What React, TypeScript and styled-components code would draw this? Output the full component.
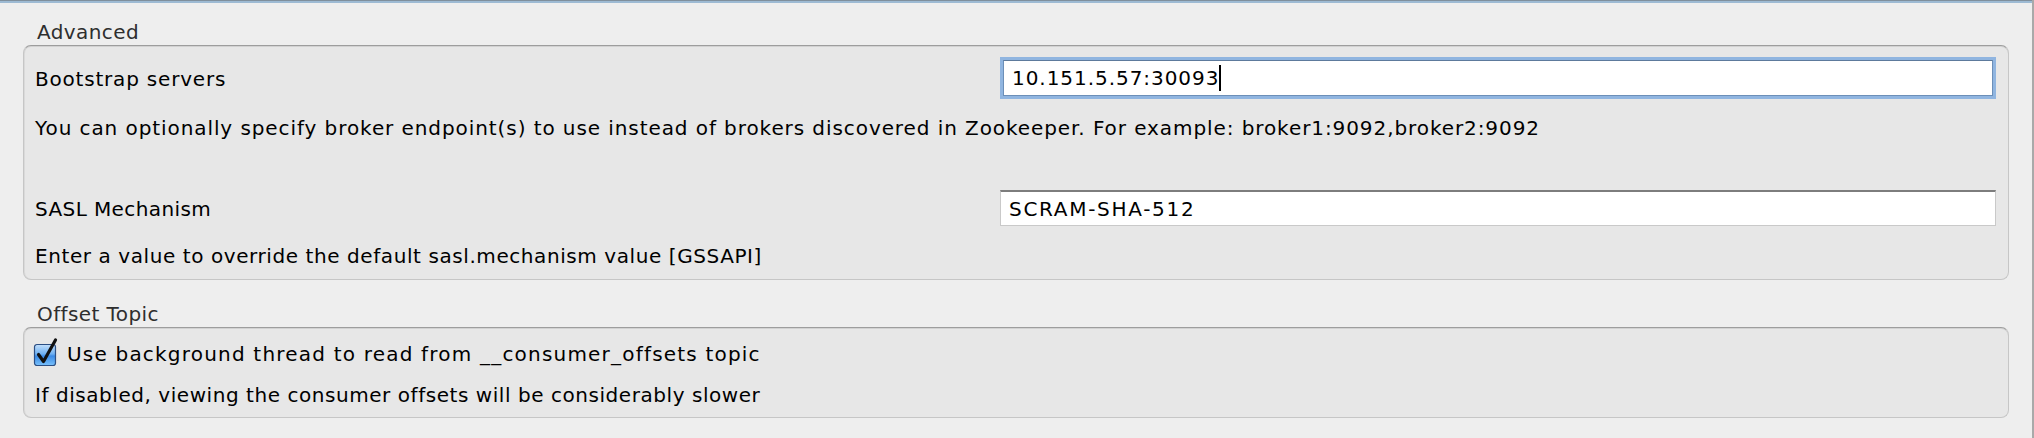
import React from "react";
import styled, { createGlobalStyle } from "styled-components";

const GlobalStyle = createGlobalStyle`
  html, body {
    margin: 0;
    padding: 0;
    background: #eeeeee;
  }
  body {
    font-family: "DejaVu Sans", "Liberation Sans", sans-serif;
    font-size: 20px;
    color: #000;
  }
`;

const Page = styled.div`
  width: 2034px;
  height: 438px;
  box-sizing: border-box;
  background: #eeeeee;
  border-right: 2px solid #a9a9a9;
  display: flex;
  flex-direction: column;
  overflow: hidden;
`;

const TopRule = styled.div`
  height: 3px;
  flex: none;
  background: linear-gradient(#7f8f9c 0 1px, #9dbad3 1px 3px);
`;

const Content = styled.div`
  padding: 17px 23px 0 23px;
  display: flex;
  flex-direction: column;
`;

const Section = styled.section<{ $gap?: number }>`
  display: flex;
  flex-direction: column;
  margin-top: ${(p) => p.$gap ?? 0}px;
`;

const Legend = styled.div`
  line-height: 24px;
  padding-left: 14px;
  color: #2e2e2e;
  letter-spacing: 0.4px;
  margin-bottom: 1px;
`;

const GroupBox = styled.div<{ $pad: string }>`
  box-sizing: border-box;
  background: #e7e7e7;
  border: 1px solid #c6c6c6;
  border-top-color: #9d9d9d;
  border-radius: 8px;
  box-shadow: inset 0 1px 0 #d2d2d2, inset 1px 0 0 #dadada;
  padding: ${(p) => p.$pad};
  display: flex;
  flex-direction: column;
`;

const FieldRow = styled.div<{ $gap?: number }>`
  display: grid;
  grid-template-columns: 965px 1fr;
  align-items: start;
  margin-top: ${(p) => p.$gap ?? 0}px;
`;

const Label = styled.div<{ $track?: number }>`
  line-height: 24px;
  margin-top: 7px;
  letter-spacing: ${(p) => p.$track ?? 0.4}px;
`;

const TextField = styled.div<{ $focused?: boolean; $track?: number }>`
  box-sizing: border-box;
  height: 36px;
  background: #ffffff;
  border: 1px solid #c9c9c9;
  border-top: 2px solid #7d7d7d;
  padding: 0 8px;
  display: flex;
  align-items: center;
  line-height: 24px;
  letter-spacing: ${(p) => p.$track ?? 0.4}px;
  ${(p) =>
    p.$focused
      ? `
    border: 1px solid #6c8fb8;
    border-top-color: #5d7a9c;
    box-shadow: 0 0 0 3px #90b5e0;
    margin: 0 3px 0 3px;
  `
      : ""}
`;

const Caret = styled.span`
  display: inline-block;
  width: 1.5px;
  height: 26px;
  background: #000;
`;

const Description = styled.div<{ $gap?: number; $track?: number }>`
  line-height: 24px;
  letter-spacing: ${(p) => p.$track ?? 0.4}px;
  margin-top: ${(p) => p.$gap ?? 0}px;
`;

const CheckRow = styled.label<{ $track?: number }>`
  display: flex;
  align-items: center;
  gap: 11px;
  line-height: 24px;
  letter-spacing: ${(p) => p.$track ?? 0.4}px;
  margin-left: -1px;
`;

const CheckIcon = styled.svg`
  width: 22px;
  height: 22px;
  flex: none;
  overflow: visible;
  margin-top: 2px;
`;

function AquaCheckbox() {
  return (
    <CheckIcon viewBox="0 0 22 22" aria-hidden="true">
      <defs>
        <linearGradient id="aquaFill" x1="0" y1="0" x2="0" y2="1">
          <stop offset="0" stopColor="#c4e0fb" />
          <stop offset="0.45" stopColor="#6eb0f2" />
          <stop offset="0.55" stopColor="#3a8ae6" />
          <stop offset="1" stopColor="#79c1fb" />
        </linearGradient>
      </defs>
      <rect x="0.5" y="0.5" width="21" height="21" rx="2.5" fill="url(#aquaFill)" stroke="#2c4f84" strokeWidth="1.2" />
      <path d="M4.5 10.5 L9.5 17.5 L21.5 -4" fill="none" stroke="#111" strokeWidth="3.2" strokeLinecap="round" strokeLinejoin="round" />
    </CheckIcon>
  );
}

export default function App() {
  return (
    <>
      <GlobalStyle />
      <Page>
        <TopRule />
        <Content>
          <Section>
            <Legend>Advanced</Legend>
            <GroupBox $pad="14px 12px 11px 11px">
              <FieldRow>
                <Label $track={0.8}>Bootstrap servers</Label>
                <TextField $focused $track={0.95}>
                  <span>10.151.5.57:30093</span>
                  <Caret />
                </TextField>
              </FieldRow>
              <Description $gap={20} $track={0.92}>
                You can optionally specify broker endpoint(s) to use instead of brokers discovered in Zookeeper. For example: broker1:9092,broker2:9092
              </Description>
              <FieldRow $gap={50}>
                <Label>SASL Mechanism</Label>
                <TextField $track={1.7}>SCRAM-SHA-512</TextField>
              </FieldRow>
              <Description $gap={18} $track={0.58}>
                Enter a value to override the default sasl.mechanism value [GSSAPI]
              </Description>
            </GroupBox>
          </Section>
          <Section $gap={22}>
            <Legend>Offset Topic</Legend>
            <GroupBox $pad="14px 12px 10px 11px">
              <CheckRow $track={1.2}>
                <AquaCheckbox />
                <span>Use background thread to read from __consumer_offsets topic</span>
              </CheckRow>
              <Description $gap={17} $track={0.55}>
                If disabled, viewing the consumer offsets will be considerably slower
              </Description>
            </GroupBox>
          </Section>
        </Content>
      </Page>
    </>
  );
}
